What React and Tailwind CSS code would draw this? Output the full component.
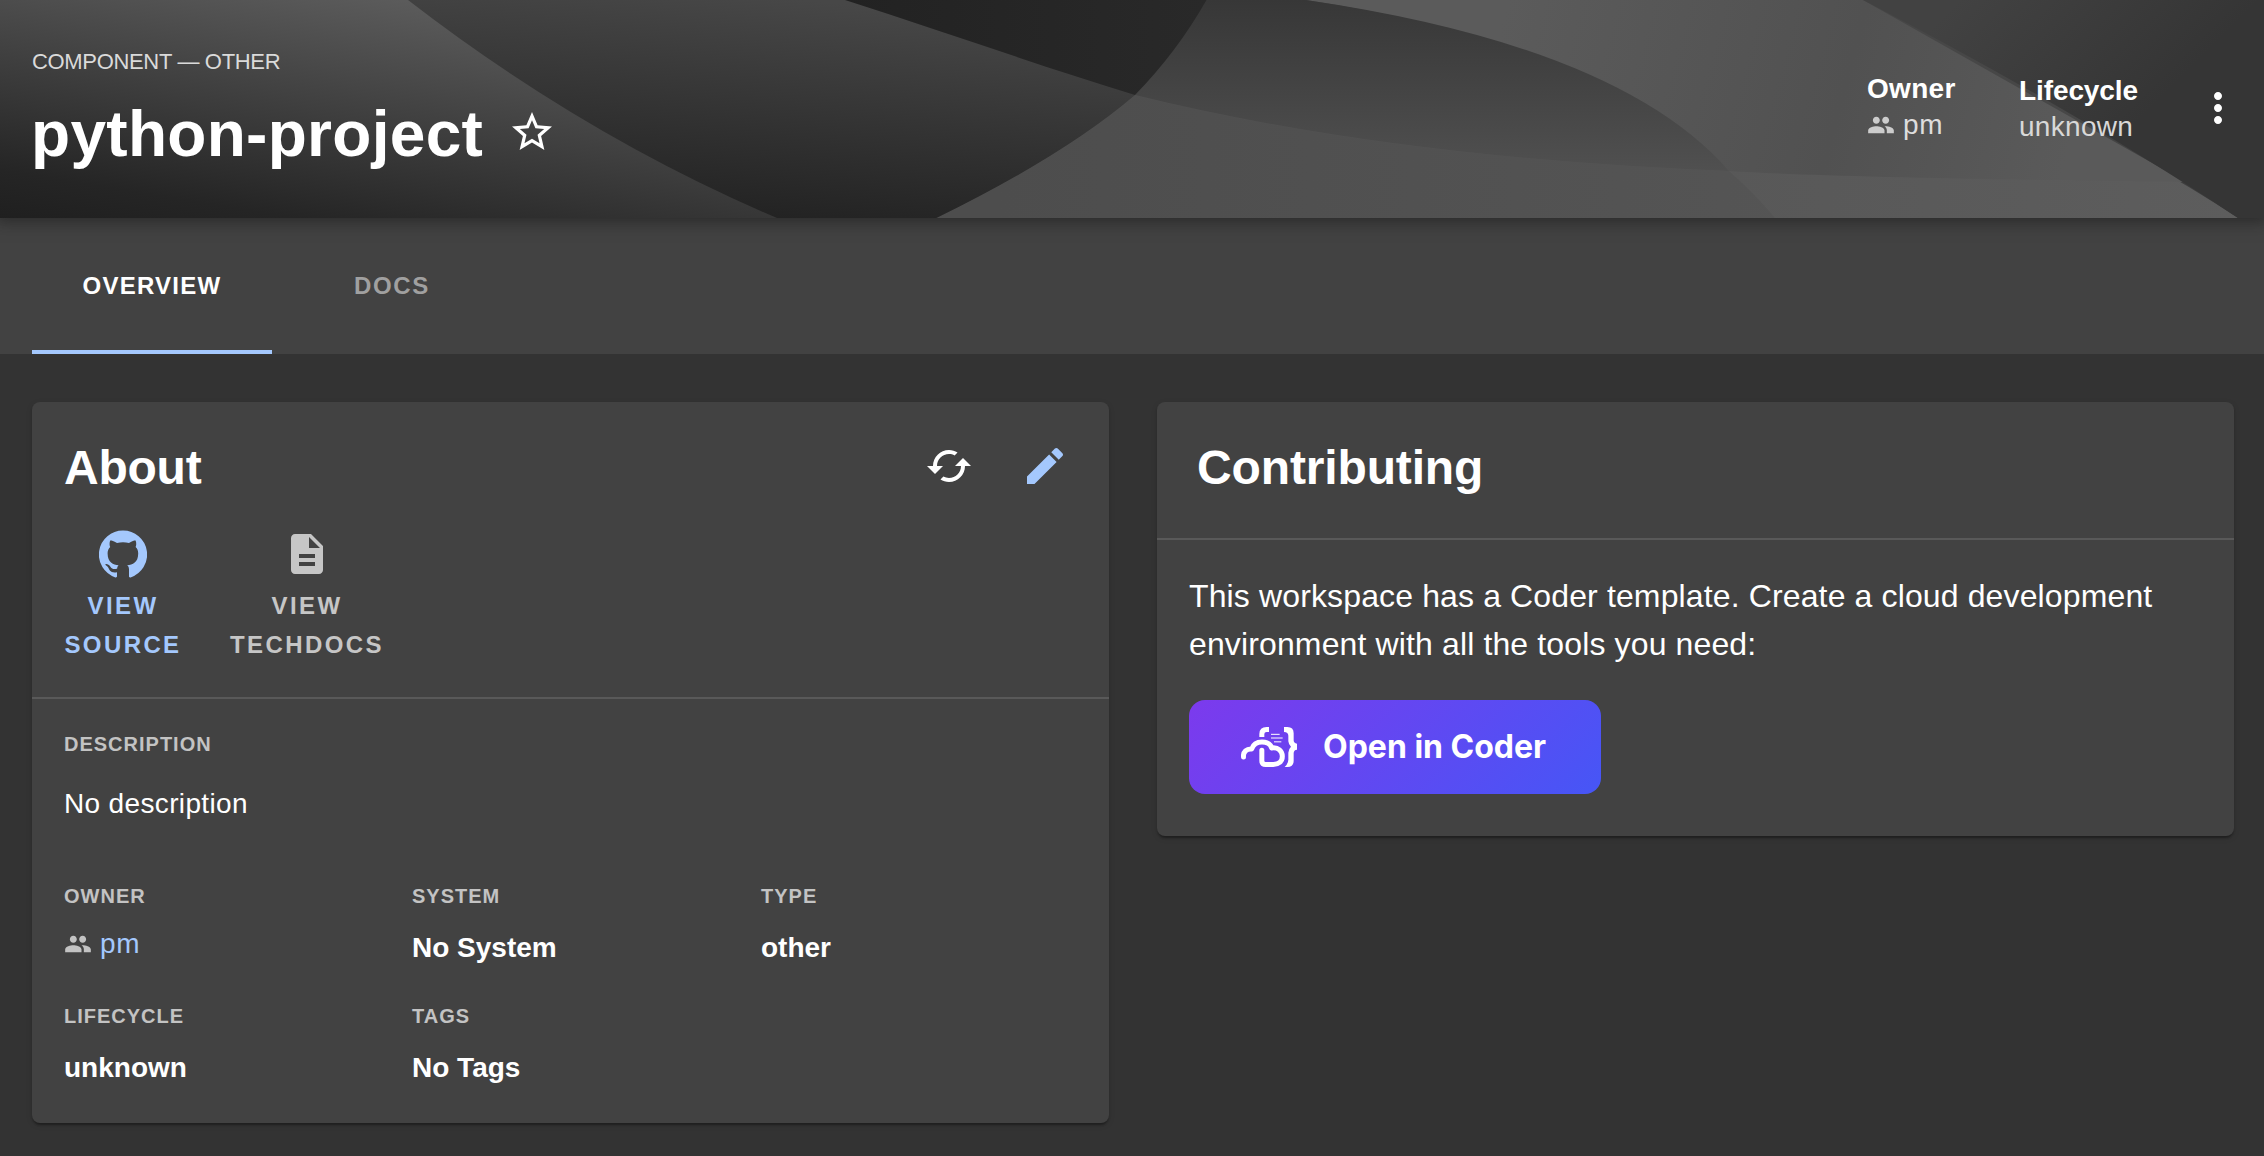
const PATHS = {
  star: "M22 9.24l-7.19-.62L12 2 9.19 8.63 2 9.24l5.46 4.73L5.82 21 12 17.27 18.18 21l-1.63-7.03L22 9.24zM12 15.4l-3.76 2.27 1-4.28-3.32-2.88 4.38-.38L12 6.1l1.71 4.04 4.38.38-3.32 2.88 1 4.28L12 15.4z",
  people:
    "M16 11c1.66 0 2.99-1.34 2.99-3S17.66 5 16 5c-1.66 0-3 1.34-3 3s1.34 3 3 3zm-8 0c1.66 0 2.99-1.34 2.99-3S9.66 5 8 5C6.34 5 5 6.34 5 8s1.34 3 3 3zm0 2c-2.33 0-7 1.17-7 3.5V19h14v-2.5c0-2.33-4.67-3.5-7-3.5zm8 0c-.29 0-.62.02-.97.05 1.16.84 1.97 1.97 1.97 3.45V19h6v-2.5c0-2.33-4.67-3.5-7-3.5z",
  more: "M12 8c1.1 0 2-.9 2-2s-.9-2-2-2-2 .9-2 2 .9 2 2 2zm0 2c-1.1 0-2 .9-2 2s.9 2 2 2 2-.9 2-2-.9-2-2-2zm0 6c-1.1 0-2 .9-2 2s.9 2 2 2 2-.9 2-2-.9-2-2-2z",
  refresh:
    "M19 8l-4 4h3c0 3.31-2.69 6-6 6-1.01 0-1.97-.25-2.8-.7l-1.46 1.46C8.97 19.54 10.43 20 12 20c4.42 0 8-3.58 8-8h3l-4-4zM6 12c0-3.31 2.69-6 6-6 1.01 0 1.97.25 2.8.7l1.46-1.46C15.03 4.46 13.57 4 12 4c-4.42 0-8 3.58-8 8H1l4 4 4-4H6z",
  edit: "M3 17.25V21h3.75L17.81 9.94l-3.75-3.75L3 17.25zM20.71 7.04c.39-.39.39-1.02 0-1.41l-2.34-2.34c-.39-.39-1.02-.39-1.41 0l-1.83 1.83 3.75 3.75 1.83-1.83z",
  github:
    "M12 .3a12 12 0 0 0-3.8 23.4c.6.1.8-.3.8-.6v-2c-3.3.7-4-1.6-4-1.6-.6-1.4-1.4-1.8-1.4-1.8-1-.7.1-.7.1-.7 1.2 0 1.9 1.2 1.9 1.2 1 1.8 2.8 1.3 3.5 1 0-.8.4-1.3.7-1.6-2.7-.3-5.5-1.3-5.5-6 0-1.2.5-2.3 1.3-3.1-.2-.4-.6-1.6 0-3.2 0 0 1-.3 3.4 1.2a11.5 11.5 0 0 1 6 0c2.3-1.5 3.3-1.2 3.3-1.2.6 1.6.2 2.8 0 3.2.9.8 1.3 1.9 1.3 3.2 0 4.6-2.8 5.6-5.5 5.9.5.4.9 1 .9 2.2v3.3c0 .3.1.7.8.6A12 12 0 0 0 12 .3",
  docs: "M14 2H6c-1.1 0-1.99.9-1.99 2L4 20c0 1.1.89 2 1.99 2H18c1.1 0 2-.9 2-2V8l-6-6zm2 16H8v-2h8v2zm0-4H8v-2h8v2zm-3-5V3.5L18.5 9H13z",
};

function Icon({ name, className }) {
  return (
    <svg viewBox="0 0 24 24" fill="currentColor" className={className} aria-hidden="true">
      <path d={PATHS[name]} />
    </svg>
  );
}

function CoderLogo() {
  return (
    <svg viewBox="63 54 168 120" className="h-10 w-14 shrink-0" fill="none" stroke="#fff" aria-hidden="true">
      <path d="M147 61.5H140Q125.500 61.500 125.500 75V84" strokeWidth="15" />
      <path
        d="M192 54H202Q221 54 221 73V94Q221 103 231 104V122Q221 123 221 133V155Q221 174 202 174H194Q204 165 205 152V131Q206 119 213 113Q206 107 205 97V80Q205 70 192 69Z"
        fill="#fff"
        stroke="none"
      />
      <path d="M153 76H179M153 87H188M162 98.500H184" strokeWidth="3" />
      <path
        d="M70.500 144C69 128 80 119 95 120C100 105 112 99 126 99C142 99 152 107 155 117C175 114 187 127 187 142C187 158 175 166.500 160 166.500H137Q125.500 166.500 125.500 155V124"
        strokeWidth="15"
        strokeLinecap="round"
        strokeLinejoin="round"
      />
    </svg>
  );
}

function HeaderPattern() {
  return (
    <svg viewBox="0 0 2264 218" preserveAspectRatio="none" className="absolute inset-0 h-full w-full" aria-hidden="true">
      <defs>
        <linearGradient id="left" gradientUnits="userSpaceOnUse" x1="400" y1="0" x2="354" y2="286">
          <stop offset="0" stopColor="#5b5b5b" />
          <stop offset=".8" stopColor="#252525" />
          <stop offset="1" stopColor="#1e1e1e" />
        </linearGradient>
        <linearGradient id="middle" gradientUnits="userSpaceOnUse" x1="800" y1="0" x2="780" y2="218">
          <stop offset="0" stopColor="#474747" />
          <stop offset="1" stopColor="#232323" />
        </linearGradient>
        <linearGradient id="dark" x1="0" y1="0" x2="1" y2="0">
          <stop offset="0" stopColor="#222222" />
          <stop offset="1" stopColor="#292929" />
        </linearGradient>
        <linearGradient id="lens" gradientUnits="userSpaceOnUse" x1="1400" y1="0" x2="1400" y2="171">
          <stop offset="0" stopColor="#373737" />
          <stop offset="1" stopColor="#505050" />
        </linearGradient>
        <linearGradient id="base" gradientUnits="userSpaceOnUse" x1="1000" y1="0" x2="2238" y2="0">
          <stop offset="0" stopColor="#515151" />
          <stop offset="1" stopColor="#5d5d5d" />
        </linearGradient>
        <linearGradient id="band" gradientUnits="userSpaceOnUse" x1="1500" y1="30" x2="2060" y2="180">
          <stop offset="0" stopColor="#5b5b5b" />
          <stop offset=".6" stopColor="#515151" />
          <stop offset="1" stopColor="#5a5a5a" />
        </linearGradient>
        <linearGradient id="right" gradientUnits="userSpaceOnUse" x1="1960" y1="0" x2="2110" y2="150">
          <stop offset="0" stopColor="#424242" />
          <stop offset="1" stopColor="#353535" />
        </linearGradient>
      </defs>
      <rect width="2264" height="218" fill="url(#middle)" />
      <path d="M0 0H408Q584 136 777 218H0Z" fill="url(#left)" />
      <path d="M936.500 218Q1065 155 1135 95L1160 40H1863Q2080 113 2238 218Z" fill="url(#base)" />
      <path d="M1135 95Q1390 158 1729 171Q1755 194 1775 218H936.500Q1065 155 1135 95Z" fill="#000" opacity=".04" />
      <path d="M1306 0Q1600 45 1729 171Q1840 178 2200 182V190L1863 0Z" fill="url(#band)" />
      <path d="M1135 95L1110 0H1306Q1620 46 1729 171Q1390 158 1135 95Z" fill="url(#lens)" />
      <path d="M845 0C945 32 1040 66 1135 95Q1177 52 1206.500 0Z" fill="url(#dark)" />
      <path d="M1863 0Q2080 113 2238 218H2264V0Z" fill="url(#right)" />
    </svg>
  );
}

function Tab({ label, active }) {
  return (
    <button
      className={
        "relative flex h-full w-60 items-center justify-center text-2xl font-bold " +
        (active ? "tracking-[1.25px] text-white" : "tracking-[1.7px] text-[#a0a0a0]")
      }
    >
      {label}
      {active && <span className="absolute inset-x-0 bottom-0 h-1 bg-[#a4c8fd]" />}
    </button>
  );
}

function Card({ className = "", children }) {
  return (
    <section
      className={
        "flex-1 rounded-lg bg-[#424242] shadow-[0_4px_2px_-2px_rgba(0,0,0,0.2),0_2px_2px_rgba(0,0,0,0.14),0_2px_6px_rgba(0,0,0,0.12)] " +
        className
      }
    >
      {children}
    </section>
  );
}

function Label({ children }) {
  return <h3 className="text-xl/8 font-bold tracking-[1px] text-[#c3c3c3]">{children}</h3>;
}

function Field({ label, children }) {
  return (
    <div>
      <Label>{label}</Label>
      <p className="mt-4 text-[28px]/10 font-bold">{children}</p>
    </div>
  );
}

function IconLink({ icon, lines, className }) {
  return (
    <a className={"flex flex-col items-center text-center text-2xl/[39px] font-bold tracking-[2.4px] " + className}>
      <Icon name={icon} className="mb-2 size-12" />
      {lines.map((line) => (
        <span key={line}>{line}</span>
      ))}
    </a>
  );
}

export default function App() {
  return (
    <div className="flex h-[1156px] w-[2264px] flex-col overflow-hidden bg-[#333333] font-['Liberation_Sans',Arial,sans-serif] text-white">
      <header className="relative z-10 h-[218px] shrink-0 shadow-[0_0_14px_4px_rgba(20,20,20,0.5)]">
        <HeaderPattern />
        <div className="relative flex h-full justify-between pr-[22px] pl-8">
          <div className="pt-12">
            <p className="text-[22px]/7 tracking-[-0.33px] text-[#dadada]">COMPONENT — OTHER</p>
            <div className="mt-5 flex items-center">
              <h1 className="-ml-px text-[64px]/[76px] font-bold tracking-[0.3px]">python-project</h1>
              <Icon name="star" className="mb-1 ml-[25px] size-12" />
            </div>
          </div>
          <div className="flex items-start pt-[71px] text-[28px]/9">
            <div className="w-[152px] pl-px">
              <p className="font-bold tracking-[0.3px]">Owner</p>
              <p className="flex items-center gap-2 tracking-[0.8px] text-[#dddddd]">
                <Icon name="people" className="size-7 text-[#cccccc]" />
                pm
              </p>
            </div>
            <div className="mt-0.5 w-44 pl-px">
              <p className="font-bold tracking-[-0.1px]">Lifecycle</p>
              <p className="tracking-[0.3px] text-[#d8d8d8]">unknown</p>
            </div>
            <Icon name="more" className="mt-[13px] size-12" />
          </div>
        </div>
      </header>

      <nav className="flex h-[136px] shrink-0 bg-[#424242] pl-8">
        <Tab label="OVERVIEW" active />
        <Tab label="DOCS" />
      </nav>

      <main className="flex items-start gap-12 pt-12 pr-[30px] pl-8">
        <Card>
          <div className="border-b-2 border-[#595959] pt-8 pb-[33px] pl-8">
            <div className="flex h-16 items-center justify-between pr-4">
              <h2 className="pt-[3px] text-5xl font-bold tracking-[-0.25px]">About</h2>
              <div className="flex">
                <span className="flex w-24 justify-center">
                  <Icon name="refresh" className="size-12" />
                </span>
                <span className="flex w-24 justify-center">
                  <Icon name="edit" className="size-12 text-[#a4c8fd]" />
                </span>
              </div>
            </div>
            <div className="mt-8 flex gap-[47px]">
              <IconLink icon="github" lines={["VIEW", "SOURCE"]} className="w-[118px] text-[#a4c8fd]" />
              <IconLink icon="docs" lines={["VIEW", "TECHDOCS"]} className="w-[156px] text-[#c6c6c6]" />
            </div>
          </div>
          <div className="pt-[29px] pb-[3px] pl-8">
            <Label>DESCRIPTION</Label>
            <p className="mt-6 text-[28px]/10 tracking-[0.35px]">No description</p>
            <div className="mt-14 grid auto-rows-[120px] grid-cols-[348px_349px_347px]">
              <div>
                <Label>OWNER</Label>
                <p className="mt-3 flex items-center gap-2 text-[28px]/10 tracking-[0.8px] text-[#a4c8fd]">
                  <Icon name="people" className="size-7 text-[#c3c3c3]" />
                  pm
                </p>
              </div>
              <Field label="SYSTEM">No System</Field>
              <Field label="TYPE">other</Field>
              <Field label="LIFECYCLE">unknown</Field>
              <Field label="TAGS">No Tags</Field>
            </div>
          </div>
        </Card>

        <Card>
          <div className="border-b-2 border-[#595959] pt-8 pb-10 pl-10">
            <h2 className="flex h-16 items-center pt-[3px] text-5xl font-bold tracking-[-0.14px]">Contributing</h2>
          </div>
          <div className="px-8 pt-8 pb-[42px]">
            <p className="text-[32px]/[48px] tracking-[0.13px]">
              This workspace has a Coder template. Create a cloud development environment with all the tools you need:
            </p>
            <button className="mt-8 flex h-[94px] w-[412px] items-center gap-[26px] rounded-2xl bg-[linear-gradient(135deg,#7c3aed,#4656f6)] pl-[52px] font-['Inter',sans-serif] text-[32px] font-bold">
              <CoderLogo />
              <span>Open in Coder</span>
            </button>
          </div>
        </Card>
      </main>
    </div>
  );
}
